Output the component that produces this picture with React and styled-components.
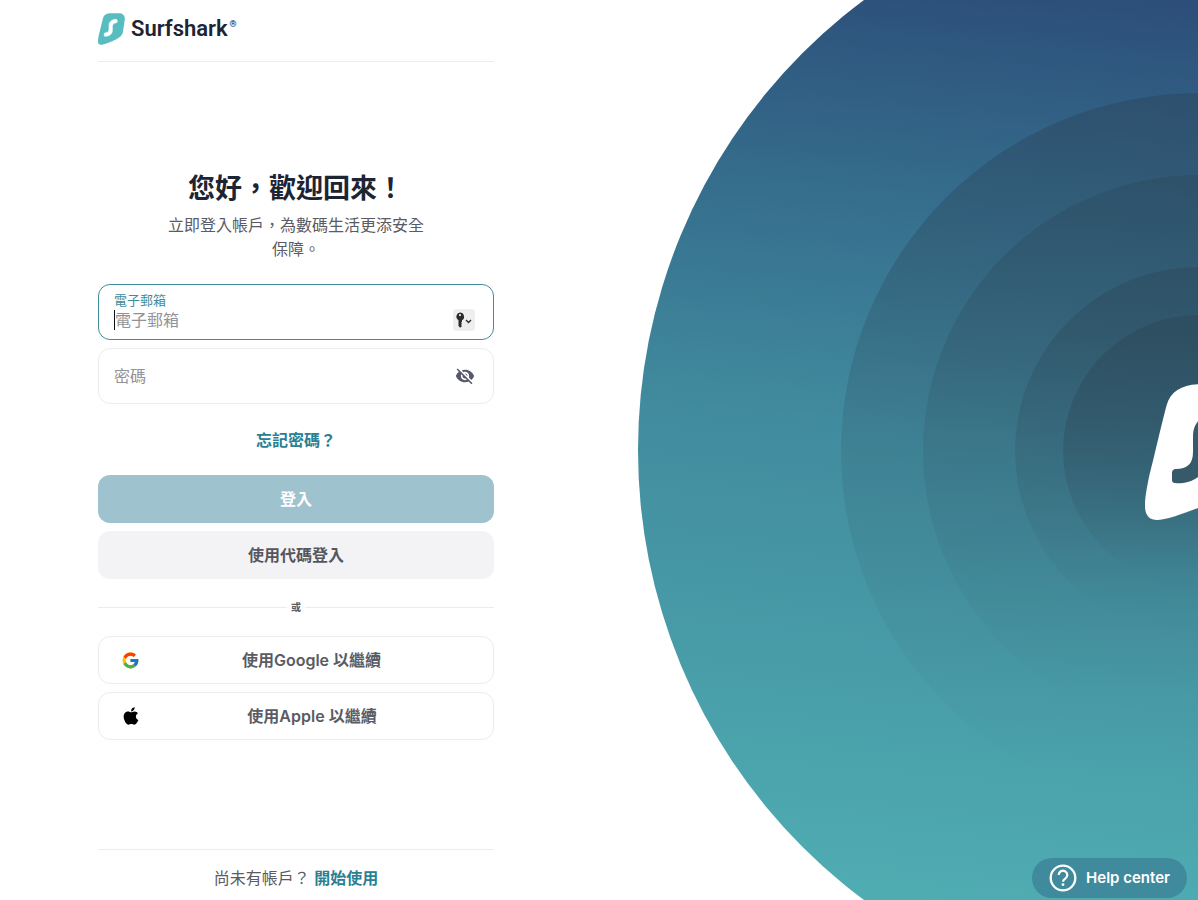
import { useState } from "react";
import styled, { createGlobalStyle } from "styled-components";
import { FcGoogle } from "react-icons/fc";
import { FaApple } from "react-icons/fa";
import { MdVisibility, MdVisibilityOff } from "react-icons/md";

const GlobalStyle = createGlobalStyle`
  * {
    box-sizing: border-box;
  }

  body {
    margin: 0;
    background: #fff;
    color: #5a5b63;
    font-family: Inter, "Noto Sans CJK TC", sans-serif;
    font-size: 16px;
    line-height: 24px;
  }

  button, input {
    font: inherit;
  }
`;

const Page = styled.div`
  display: flex;
  min-height: 100vh;
`;

const LoginColumn = styled.div`
  flex: none;
  display: flex;
  flex-direction: column;
  width: 592px;
  max-width: 100%;
  padding: 0 98px;
`;

const Header = styled.header`
  padding: 12px 0 16px;
  border-bottom: 1px solid #ececee;
`;

const Brand = styled.a`
  display: flex;
  align-items: center;
  gap: 6px;
  height: 33px;
  color: #1d2433;
  font-family: Roboto, sans-serif;
  font-size: 22px;
  font-weight: 600;
  line-height: 32px;
  text-decoration: none;

  sup {
    align-self: flex-start;
    margin-left: -4px;
    font-size: 9px;
    line-height: 24px;
  }
`;

const Main = styled.main`
  flex: 1;
  display: flex;
  flex-direction: column;
  justify-content: center;
  padding-bottom: 2px;
`;

const Title = styled.h1`
  margin: 0 0 4px;
  color: #1d2433;
  font-size: 27px;
  font-weight: 600;
  line-height: 40px;
  text-align: center;
`;

const Subtitle = styled.p`
  width: 264px;
  margin: 0 auto 23px;
  text-align: center;
`;

const Form = styled.form`
  display: flex;
  flex-direction: column;
  gap: 8px;
`;

const Field = styled.div`
  display: flex;
  align-items: center;
  height: 56px;
  padding: 0 18px 0 15px;
  border: 1px solid ${({ $active }) => ($active ? "#3f8c99" : "#ececee")};
  border-radius: 12px;
`;

const FieldBody = styled.div`
  flex: 1;
  min-width: 0;
`;

const FieldLabel = styled.label`
  display: block;
  color: #3f8c9e;
  font-size: 13px;
  line-height: 16px;
`;

const InputRow = styled.div`
  display: flex;
  align-items: center;
  height: 24px;
`;

const Caret = styled.span`
  width: 1px;
  height: 20px;
  background: #111;
`;

const Input = styled.input`
  flex: 1;
  min-width: 0;
  height: 24px;
  padding: 0;
  border: 0;
  outline: 0;
  background: transparent;
  color: #1d2433;

  &::placeholder {
    color: #929298;
    opacity: 1;
  }
`;

const KeyButton = styled.button`
  display: flex;
  align-items: center;
  justify-content: center;
  align-self: flex-end;
  width: 22px;
  height: 22px;
  margin-bottom: 8px;
  padding: 0;
  border: 0;
  border-radius: 4px;
  background: #eeeeef;
  color: #2a2a2c;
`;

const EyeButton = styled.button`
  display: flex;
  padding: 0;
  border: 0;
  background: none;
  color: #56576b;
`;

const TextLink = styled.a`
  color: #2b8093;
  font-weight: 600;
  text-decoration: none;
`;

const Forgot = styled.div`
  margin: 16px 0 15px;
  text-align: center;
`;

const Button = styled.button`
  height: 48px;
  border: 0;
  border-radius: 12px;
  background: ${({ $primary }) => ($primary ? "#9fc3ce" : "#f3f3f5")};
  color: ${({ $primary }) => ($primary ? "#fff" : "#56575e")};
  font-weight: 600;
`;

const Divider = styled.div`
  display: flex;
  align-items: center;
  gap: 4px;
  margin: 22px 0 23px;
  font-size: 10px;
  font-weight: 600;
  line-height: 12px;

  &::before,
  &::after {
    content: "";
    flex: 1;
    height: 1px;
    background: #ececee;
  }
`;

const SocialList = styled.div`
  display: flex;
  flex-direction: column;
  gap: 8px;
`;

const SocialButton = styled.button`
  display: flex;
  align-items: center;
  height: 48px;
  padding: 0 10px 0 22px;
  border: 1px solid #ececee;
  border-radius: 12px;
  background: #fff;
  color: #5a5b63;
  font-weight: 600;

  svg {
    flex: none;
  }

  span {
    flex: 1;
  }
`;

const Footer = styled.footer`
  padding: 16px 0 10px;
  border-top: 1px solid #ececee;
  text-align: center;
`;

const Hero = styled.aside`
  position: sticky;
  top: 0;
  flex: 1;
  display: flex;
  align-items: center;
  justify-content: flex-end;
  min-width: 0;
  height: 100vh;
  overflow: hidden;

  svg {
    flex: none;
  }
`;

const HelpButton = styled.button`
  position: fixed;
  right: 11px;
  bottom: 2px;
  display: flex;
  align-items: center;
  gap: 9px;
  height: 40px;
  padding: 0 17px;
  border: 0;
  border-radius: 20px;
  background: #3f8a9c;
  color: #fff;
  font-size: 15px;
  font-weight: 600;
`;

const SHIELD =
  "M58 0C38 0 26 6 21.7 21C16 42 8 78 4 93C1 108 0 114 0 122C0 132 5 136 12 136C24 136 60 122 78 113C98 103 107 95 109 76L116 28C118 10 108 0 90 0Z";
const WAVE =
  "M31 85C42 85 48 80 48 68V54C48 46 49 42 54 36C60 28 72 26 79 27Q83 27 83 31V37Q83 41 79 41C70 41 62 46 62 58V72C62 82 60 86 54 92C48 98 36 100 30 99Q27 99 27 96V89Q27 85 31 85Z";

const LogoMark = () => (
  <svg width="27" height="32" viewBox="0 0 117 136" aria-hidden="true">
    <path d={SHIELD} fill="#58bdc0" />
    <path d={WAVE} fill="#fff" stroke="#fff" strokeWidth="3" />
  </svg>
);

const KeyIcon = () => (
  <svg width="18" height="16" viewBox="0 0 18 16" aria-hidden="true">
    <path
      fillRule="evenodd"
      fill="currentColor"
      d="M5 0.5a4.2 4.2 0 0 1 2 7.8v1.5l-1 1 1 1-1 1.2 1 1-1.8 1.8L3.5 14V8.3A4.2 4.2 0 0 1 5 0.5ZM5 2a1.1 1.1 0 1 0 0 2.2A1.1 1.1 0 0 0 5 2Z"
    />
    <path d="M11 8l2.5 2.5L16 8" fill="none" stroke="currentColor" strokeWidth="1.3" />
  </svg>
);

const HelpIcon = () => (
  <svg width="28" height="28" viewBox="0 0 28 28" fill="none" aria-hidden="true">
    <circle cx="14" cy="14" r="12.3" stroke="#fff" strokeWidth="2.3" />
    <path
      d="M9.7 11a4.3 4.3 0 1 1 6.6 3.6c-1.5 1-2.3 1.5-2.3 3.2"
      stroke="#fff"
      strokeWidth="2.2"
    />
    <circle cx="14" cy="20.6" r="1.4" fill="#fff" />
  </svg>
);

// darker rings, outermost first, each fading out towards the bottom
const rings = [
  { r: 358, color: "#2b4258", top: 0.45, mid: 0.15 },
  { r: 276, color: "#2b4354", top: 0.35, mid: 0.15 },
  { r: 184, color: "#2b4354", top: 0.4, mid: 0.2 },
  { r: 136, color: "#2b4354", top: 0.45, mid: 0.3 },
];

const HeroArt = () => (
  <svg width="560" height="1122" viewBox="0 0 560 1122" aria-hidden="true">
    <defs>
      <linearGradient id="sea" gradientUnits="userSpaceOnUse" x1="590" y1="90" x2="500" y2="1040">
        <stop offset="0" stopColor="#2b4a77" />
        <stop offset="0.28" stopColor="#36708e" />
        <stop offset="0.5" stopColor="#418b9e" />
        <stop offset="1" stopColor="#4fadb2" />
      </linearGradient>
      {rings.map(({ r, color, top, mid }) => (
        <linearGradient key={r} id={`ring${r}`} x1="0" y1="0" x2="0" y2="1">
          <stop offset="0" stopColor={color} stopOpacity={top} />
          <stop offset="0.5" stopColor={color} stopOpacity={mid} />
          <stop offset="0.95" stopColor={color} stopOpacity="0" />
        </linearGradient>
      ))}
    </defs>
    <circle cx="561" cy="561" r="561" fill="url(#sea)" />
    {rings.map(({ r }) => (
      <circle key={r} cx="561" cy="562" r={r} fill={`url(#ring${r})`} />
    ))}
    <g transform="translate(507 495)">
      <path d={SHIELD} fill="#fff" />
      <path d={WAVE} fill="#365a6a" />
    </g>
  </svg>
);

export default function App() {
  const [email, setEmail] = useState("");
  const [showPassword, setShowPassword] = useState(false);

  return (
    <>
      <GlobalStyle />
      <Page lang="zh-Hant">
        <LoginColumn>
          <Header>
            <Brand href="#">
              <LogoMark />
              Surfshark
              <sup>®</sup>
            </Brand>
          </Header>

          <Main>
            <Title>您好，歡迎回來！</Title>
            <Subtitle>立即登入帳戶，為數碼生活更添安全保障。</Subtitle>

            <Form onSubmit={(e) => e.preventDefault()}>
              <Field $active>
                <FieldBody>
                  <FieldLabel htmlFor="email">電子郵箱</FieldLabel>
                  <InputRow>
                    {!email && <Caret />}
                    <Input
                      id="email"
                      type="email"
                      placeholder="電子郵箱"
                      value={email}
                      onChange={(e) => setEmail(e.target.value)}
                    />
                  </InputRow>
                </FieldBody>
                <KeyButton type="button" aria-label="密碼管理">
                  <KeyIcon />
                </KeyButton>
              </Field>

              <Field>
                <Input
                  type={showPassword ? "text" : "password"}
                  placeholder="密碼"
                  aria-label="密碼"
                />
                <EyeButton
                  type="button"
                  aria-label="顯示密碼"
                  onClick={() => setShowPassword(!showPassword)}
                >
                  {showPassword ? <MdVisibility size={20} /> : <MdVisibilityOff size={20} />}
                </EyeButton>
              </Field>

              <Forgot>
                <TextLink href="#">忘記密碼？</TextLink>
              </Forgot>

              <Button type="submit" $primary>
                登入
              </Button>
              <Button type="button">使用代碼登入</Button>
            </Form>

            <Divider>或</Divider>

            <SocialList>
              <SocialButton type="button">
                <FcGoogle size={19} />
                <span>使用Google 以繼續</span>
              </SocialButton>
              <SocialButton type="button">
                <FaApple size={20} color="#000" />
                <span>使用Apple 以繼續</span>
              </SocialButton>
            </SocialList>
          </Main>

          <Footer>
            尚未有帳戶？ <TextLink href="#">開始使用</TextLink>
          </Footer>
        </LoginColumn>

        <Hero>
          <HeroArt />
        </Hero>

        <HelpButton type="button">
          <HelpIcon />
          Help center
        </HelpButton>
      </Page>
    </>
  );
}
